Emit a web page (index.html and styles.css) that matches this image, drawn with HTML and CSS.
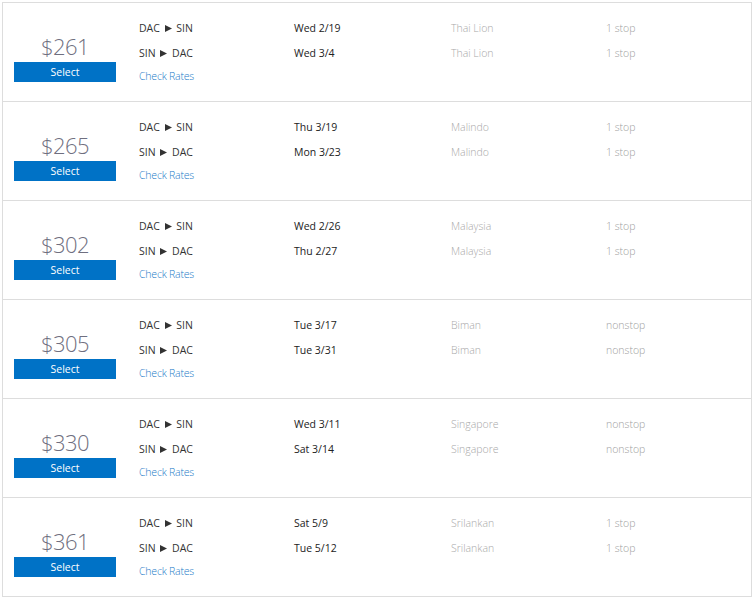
FILE: index.html
```html
<!DOCTYPE html>
<html>
<head>
<meta charset="utf-8">
<link rel="stylesheet" href="styles.css">
</head>
<body>
<div class="results">
  <div class="row">
    <div class="price-col"><div class="price">$261</div><button class="select">Select</button></div>
    <div class="route-col">
      <div class="line">DAC <svg class="arr" viewBox="0 0 8 8"><path d="M0 0L8 4L0 8Z"/></svg> SIN</div>
      <div class="line">SIN <svg class="arr" viewBox="0 0 8 8"><path d="M0 0L8 4L0 8Z"/></svg> DAC</div>
      <a class="rates">Check Rates</a>
    </div>
    <div class="col date"><div class="line">Wed 2/19</div><div class="line">Wed 3/4</div></div>
    <div class="col airline"><div class="line">Thai Lion</div><div class="line">Thai Lion</div></div>
    <div class="col stops"><div class="line">1 stop</div><div class="line">1 stop</div></div>
  </div>
  <div class="row">
    <div class="price-col"><div class="price">$265</div><button class="select">Select</button></div>
    <div class="route-col">
      <div class="line">DAC <svg class="arr" viewBox="0 0 8 8"><path d="M0 0L8 4L0 8Z"/></svg> SIN</div>
      <div class="line">SIN <svg class="arr" viewBox="0 0 8 8"><path d="M0 0L8 4L0 8Z"/></svg> DAC</div>
      <a class="rates">Check Rates</a>
    </div>
    <div class="col date"><div class="line">Thu 3/19</div><div class="line">Mon 3/23</div></div>
    <div class="col airline"><div class="line">Malindo</div><div class="line">Malindo</div></div>
    <div class="col stops"><div class="line">1 stop</div><div class="line">1 stop</div></div>
  </div>
  <div class="row">
    <div class="price-col"><div class="price">$302</div><button class="select">Select</button></div>
    <div class="route-col">
      <div class="line">DAC <svg class="arr" viewBox="0 0 8 8"><path d="M0 0L8 4L0 8Z"/></svg> SIN</div>
      <div class="line">SIN <svg class="arr" viewBox="0 0 8 8"><path d="M0 0L8 4L0 8Z"/></svg> DAC</div>
      <a class="rates">Check Rates</a>
    </div>
    <div class="col date"><div class="line">Wed 2/26</div><div class="line">Thu 2/27</div></div>
    <div class="col airline"><div class="line">Malaysia</div><div class="line">Malaysia</div></div>
    <div class="col stops"><div class="line">1 stop</div><div class="line">1 stop</div></div>
  </div>
  <div class="row">
    <div class="price-col"><div class="price">$305</div><button class="select">Select</button></div>
    <div class="route-col">
      <div class="line">DAC <svg class="arr" viewBox="0 0 8 8"><path d="M0 0L8 4L0 8Z"/></svg> SIN</div>
      <div class="line">SIN <svg class="arr" viewBox="0 0 8 8"><path d="M0 0L8 4L0 8Z"/></svg> DAC</div>
      <a class="rates">Check Rates</a>
    </div>
    <div class="col date"><div class="line">Tue 3/17</div><div class="line">Tue 3/31</div></div>
    <div class="col airline"><div class="line">Biman</div><div class="line">Biman</div></div>
    <div class="col stops"><div class="line">nonstop</div><div class="line">nonstop</div></div>
  </div>
  <div class="row">
    <div class="price-col"><div class="price">$330</div><button class="select">Select</button></div>
    <div class="route-col">
      <div class="line">DAC <svg class="arr" viewBox="0 0 8 8"><path d="M0 0L8 4L0 8Z"/></svg> SIN</div>
      <div class="line">SIN <svg class="arr" viewBox="0 0 8 8"><path d="M0 0L8 4L0 8Z"/></svg> DAC</div>
      <a class="rates">Check Rates</a>
    </div>
    <div class="col date"><div class="line">Wed 3/11</div><div class="line">Sat 3/14</div></div>
    <div class="col airline"><div class="line">Singapore</div><div class="line">Singapore</div></div>
    <div class="col stops"><div class="line">nonstop</div><div class="line">nonstop</div></div>
  </div>
  <div class="row">
    <div class="price-col"><div class="price">$361</div><button class="select">Select</button></div>
    <div class="route-col">
      <div class="line">DAC <svg class="arr" viewBox="0 0 8 8"><path d="M0 0L8 4L0 8Z"/></svg> SIN</div>
      <div class="line">SIN <svg class="arr" viewBox="0 0 8 8"><path d="M0 0L8 4L0 8Z"/></svg> DAC</div>
      <a class="rates">Check Rates</a>
    </div>
    <div class="col date"><div class="line">Sat 5/9</div><div class="line">Tue 5/12</div></div>
    <div class="col airline"><div class="line">Srilankan</div><div class="line">Srilankan</div></div>
    <div class="col stops"><div class="line">1 stop</div><div class="line">1 stop</div></div>
  </div>
</div>
</body>
</html>
```
FILE: styles.css
```css
html, body {
  margin: 0;
  padding: 0;
  background: #fff;
}
body {
  font-family: "Open Sans", "Noto Sans", sans-serif;
  font-size: 10.5px;
  color: #333;
}
.results {
  margin: 2px;
  width: 750px;
  box-sizing: border-box;
  border: 1px solid #dddddd;
}
.row {
  display: grid;
  grid-template-columns: 136px 155px 157px 155px 1fr;
  height: 98px;
  border-bottom: 1px solid #dddddd;
}
.row:last-child {
  border-bottom: none;
}
.price-col {
  padding: 29px 0 0 11px;
  display: flex;
  flex-direction: column;
  align-items: flex-start;
}
.price {
  width: 102px;
  text-align: center;
  font-size: 22px;
  letter-spacing: -0.6px;
  font-weight: 300;
  line-height: 28px;
  color: #6f6f80;
  margin-bottom: 2px;
}
.select {
  width: 102px;
  height: 20px;
  border: none;
  margin: 0;
  padding: 0;
  background: #0072c6;
  color: #fff;
  font-family: inherit;
  font-size: 10.5px;
  line-height: 20px;
  cursor: pointer;
}
.route-col, .col {
  padding-top: 13px;
}
.line {
  height: 25px;
  line-height: 25px;
  white-space: nowrap;
}
.route-col .line {
  color: #333;
}
.arr {
  width: 7px;
  height: 7px;
  fill: #333;
  margin: 0 2px;
  vertical-align: 0;
}
.rates {
  display: block;
  line-height: 20px;
  color: #1a7ac8;
  font-weight: 300;
  letter-spacing: -0.2px;
}
.date .line {
  color: #222;
}
.airline .line {
  color: #a8a8a8;
  font-weight: 300;
}
.stops .line {
  color: #a0a0a0;
  font-weight: 300;
}
```
